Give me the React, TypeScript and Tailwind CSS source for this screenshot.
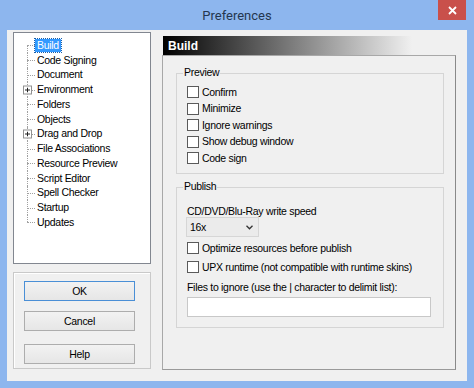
import React from "react";

type TreeItem = { label: string; sel?: boolean; plus?: boolean };

const items: TreeItem[] = [
  { label: "Build", sel: true },
  { label: "Code Signing" },
  { label: "Document" },
  { label: "Environment", plus: true },
  { label: "Folders" },
  { label: "Objects" },
  { label: "Drag and Drop", plus: true },
  { label: "File Associations" },
  { label: "Resource Preview" },
  { label: "Script Editor" },
  { label: "Spell Checker" },
  { label: "Startup" },
  { label: "Updates" },
];

function TreeRow({ item, i, last }: { item: TreeItem; i: number; last: number }) {
  const vert =
    i === 0 ? "top-1/2 bottom-0" : i === last ? "top-0 bottom-1/2" : "top-0 bottom-0";
  return (
    <div className="flex items-center h-[14.75px]">
      <div className="relative w-[23px] h-full shrink-0">
        <div className={`absolute left-[13px] ${vert} border-l border-dotted border-[#a0a0a0]`} />
        <div className="absolute left-[13px] top-1/2 w-[8px] border-t border-dotted border-[#a0a0a0]" />
        {item.plus && (
          <div className="absolute left-[9px] top-1/2 -translate-y-1/2 w-[9px] h-[9px] border border-[#919191] bg-white flex items-center justify-center">
            <svg width="5" height="5" viewBox="0 0 5 5">
              <path d="M0 2.5H5M2.5 0V5" stroke="#222" strokeWidth="1" />
            </svg>
          </div>
        )}
      </div>
      {item.sel ? (
        <span className="ml-[-2px] px-[2px] h-[13px] leading-[13px] bg-[#3399ff] text-white outline outline-1 outline-dotted outline-[#1a5fa8]">
          {item.label}
        </span>
      ) : (
        <span className="leading-[13px] whitespace-nowrap">{item.label}</span>
      )}
    </div>
  );
}

function Check({ label }: { label: string }) {
  return (
    <div className="flex items-center">
      <div className="w-[12px] h-[12px] border border-[#5a5a5a] bg-white shrink-0" />
      <span className="ml-[3px] leading-[13px] whitespace-nowrap">{label}</span>
    </div>
  );
}

function Btn({ label, def }: { label: string; def?: boolean }) {
  return (
    <div
      className={`w-[111px] h-[20px] border ${
        def ? "border-[#4a8fd6]" : "border-[#adadad]"
      } bg-[linear-gradient(#f2f2f2,#e6e6e6)] flex items-center justify-center leading-[13px]`}
    >
      {label}
    </div>
  );
}

export default function App() {
  const last = items.length - 1;
  return (
    <div className="w-[474px] h-[388px] bg-[#8db6ee] flex flex-col overflow-hidden font-['Liberation_Sans',Arial,sans-serif] text-[10.5px] tracking-[-0.3px] text-black">
      {/* title bar */}
      <div className="relative h-[30px] shrink-0 flex items-center justify-center">
        <span className="font-['Roboto','Liberation_Sans',sans-serif] text-[13px] tracking-normal text-[#24364f] mt-[1px]">
          Preferences
        </span>
        <div className="absolute right-[8px] top-0 w-[28px] h-[20px] bg-[#c9504b] flex items-center justify-center">
          <svg width="9" height="9" viewBox="0 0 9 9">
            <path d="M1 1L8 8M8 1L1 8" stroke="#fff" strokeWidth="1.8" />
          </svg>
        </div>
      </div>

      {/* client */}
      <div className="mx-[7px] h-[351px] bg-[#f0f0f0] flex pl-[6px] pt-[2px]">
        {/* left column */}
        <div className="w-[138px] flex flex-col shrink-0">
          <div className="h-[232px] border border-[#828790] bg-white pt-[5px]">
            {items.map((it, i) => (
              <TreeRow key={it.label} item={it} i={i} last={last} />
            ))}
          </div>
          <div className="mt-[8px] h-[97px] border border-[#c9c9c9] shadow-[inset_1px_1px_0_#fff] flex flex-col pl-[10px] pt-[8px]">
            <Btn label="OK" def />
            <div className="mt-[10px]">
              <Btn label="Cancel" />
            </div>
            <div className="mt-[13px]">
              <Btn label="Help" />
            </div>
          </div>
        </div>

        {/* right column */}
        <div className="ml-[11px] mt-[4px] w-[294px] flex flex-col shrink-0">
          <div className="h-[19px] ml-[1px] bg-[linear-gradient(to_right,#000_0%,#f0f0f0_85%)] flex items-center pl-[5px]">
            <span className="text-white font-bold text-[12px] tracking-normal leading-[14px]">Build</span>
          </div>
          <div className="h-[315px] border border-[#a8a8a8] border-r-[#8a8a8a] border-b-[#9a9a9a] pl-[13px] pt-[17px]">
            {/* Preview group */}
            <div className="relative w-[268px] h-[101px] border border-[#d5d5d5] pl-[10px] pt-[10px]">
              <span className="absolute left-[6px] top-[-8px] px-[1px] bg-[#f0f0f0] leading-[13px]">Preview</span>
              {["Confirm", "Minimize", "Ignore warnings", "Show debug window", "Code sign"].map((l) => (
                <div key={l} className="h-[16.5px] flex items-center">
                  <Check label={l} />
                </div>
              ))}
            </div>

            {/* Publish group */}
            <div className="relative mt-[13px] w-[268px] h-[141px] border border-[#d5d5d5] pl-[10px] pt-[17px]">
              <span className="absolute left-[6px] top-[-8px] px-[1px] bg-[#f0f0f0] leading-[13px]">Publish</span>
              <div className="h-[12px] leading-[12px] whitespace-nowrap">CD/DVD/Blu-Ray write speed</div>
              <div className="ml-[-1px] w-[73px] h-[20px] border border-[#d6d6d6] bg-[#ebebeb] flex items-center justify-between pl-[3px] pr-[5px]">
                <span className="leading-[13px]">16x</span>
                <svg width="7" height="5" viewBox="0 0 7 5">
                  <path d="M0.5 0.8L3.5 3.8L6.5 0.8" stroke="#333" strokeWidth="1.3" fill="none" />
                </svg>
              </div>
              <div className="mt-[1.5px] h-[19px] flex items-center">
                <Check label="Optimize resources before publish" />
              </div>
              <div className="h-[19px] flex items-center">
                <Check label="UPX runtime (not compatible with runtime skins)" />
              </div>
              <div className="mt-[4.5px] h-[12px] leading-[12px] whitespace-nowrap">
                Files to ignore (use the | character to delimit list):
              </div>
              <div className="mt-[4px] w-[244px] h-[20px] border border-[#c8c8c8] bg-white" />
            </div>
          </div>
        </div>
      </div>
    </div>
  );
}
